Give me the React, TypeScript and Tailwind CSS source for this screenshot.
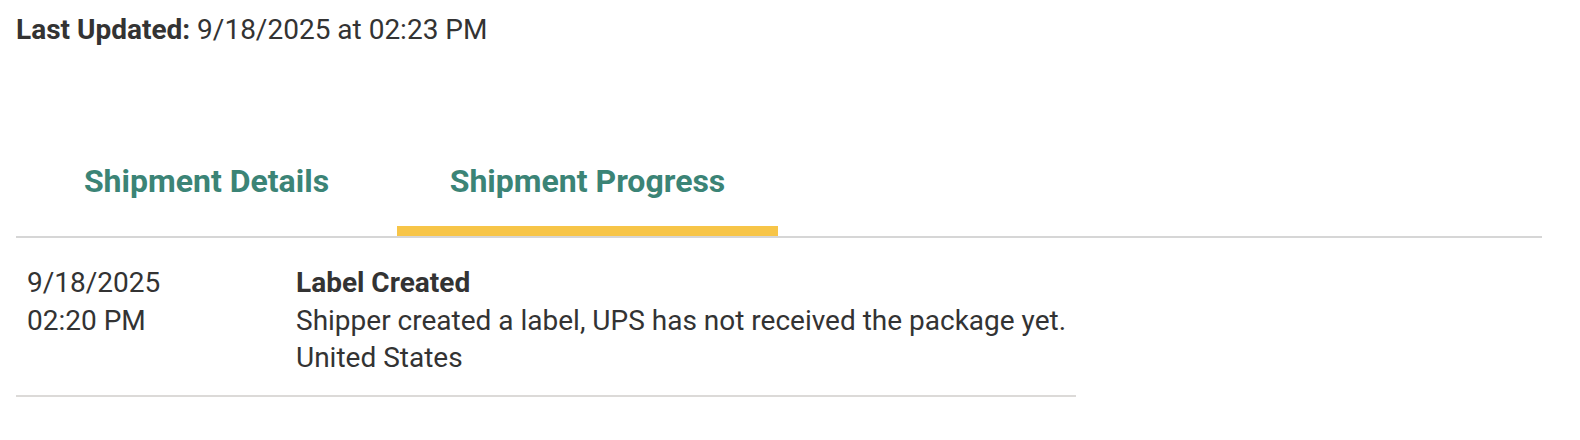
export default function App() {
  return (
    <div className="min-h-[440px] bg-white px-4 font-['Roboto',sans-serif] text-[#333333]">
      <p className="pt-3 text-[28px] leading-[36px]">
        <span className="font-bold">Last Updated:</span> 9/18/2025 at 02:23 PM
      </p>

      <div className="mt-[87px] flex w-[1526px] border-b-2 border-[#d6d6d6]">
        <button className="w-[381px] border-b-[10px] border-transparent pt-[27px] pb-[26px] text-center text-[32px] leading-[38px] font-bold text-[#3b8476]">
          Shipment Details
        </button>
        <button className="w-[381px] border-b-[10px] border-[#f7c548] pt-[27px] pb-[26px] text-center text-[32px] leading-[38px] font-bold text-[#3b8476]">
          Shipment Progress
        </button>
      </div>

      <div className="flex w-[1060px] border-b-2 border-[#dcdad8] pt-[26px] pb-[18px] pl-[11px] text-[28px] leading-[37.5px]">
        <div className="w-[269px]">
          <div>9/18/2025</div>
          <div>02:20 PM</div>
        </div>
        <div>
          <div className="font-bold">Label Created</div>
          <div>Shipper created a label, UPS has not received the package yet.</div>
          <div>United States</div>
        </div>
      </div>
    </div>
  );
}
